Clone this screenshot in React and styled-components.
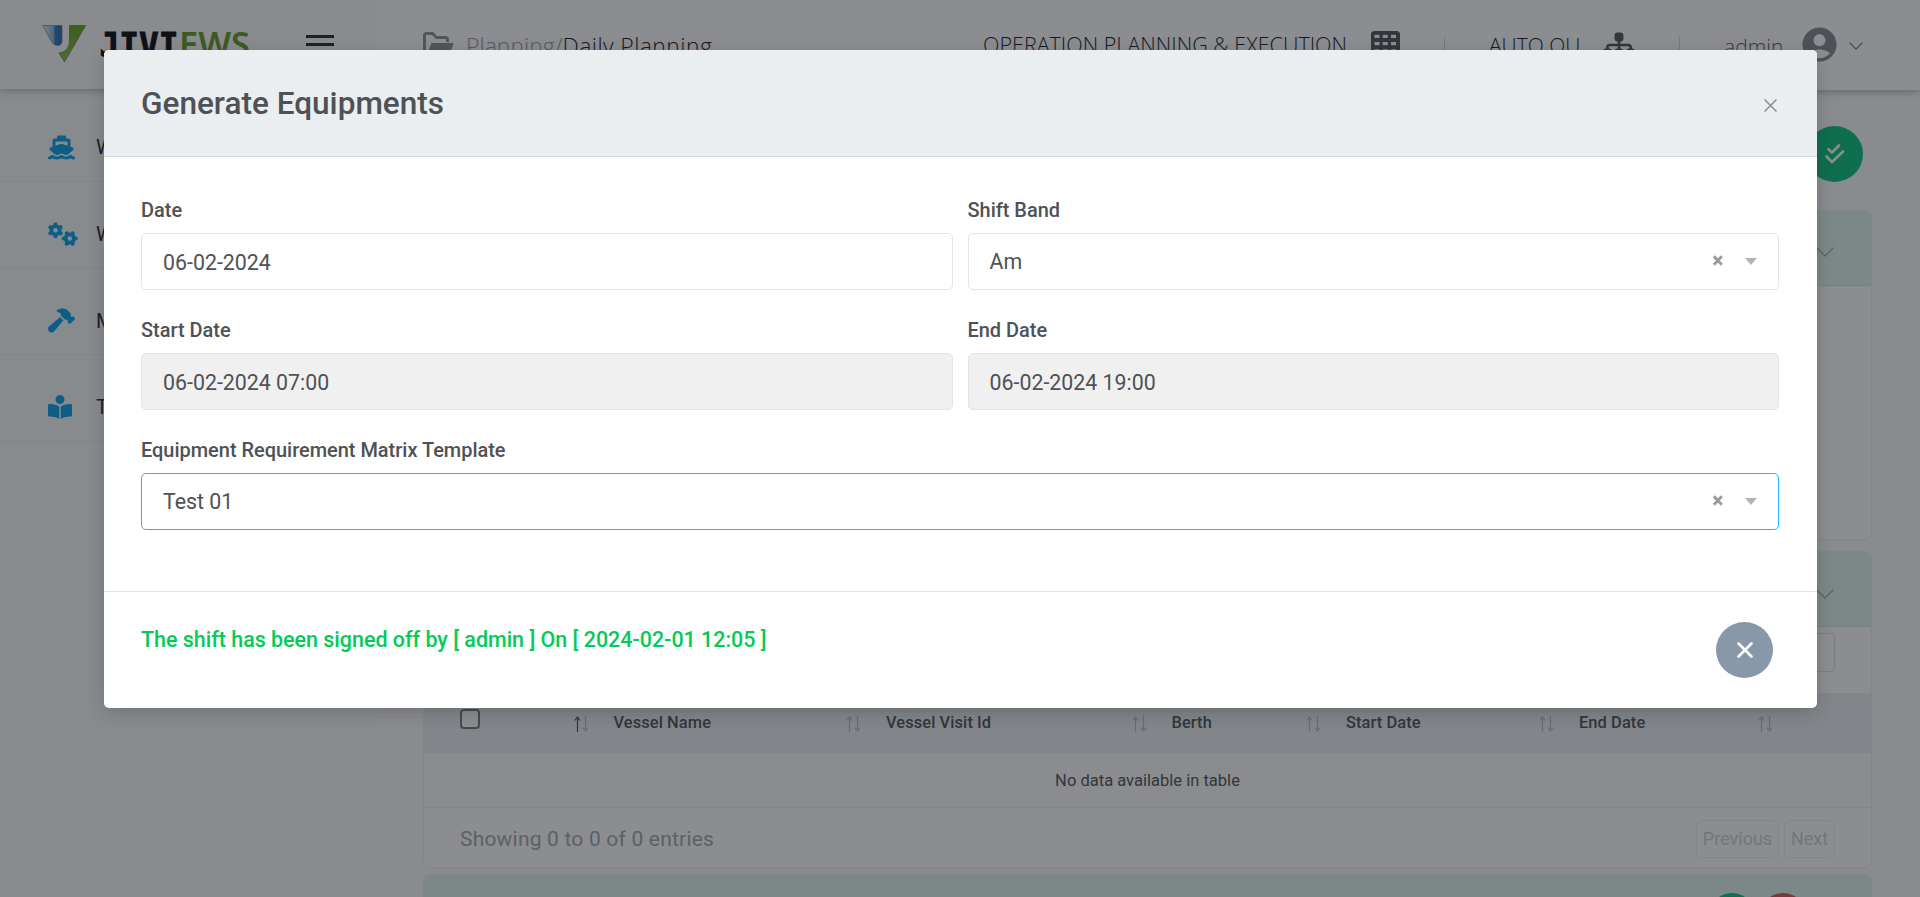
import React from "react";
import styled, { createGlobalStyle } from "styled-components";
import { FaShip, FaGears, FaHammer, FaBookOpenReader, FaSitemap } from "react-icons/fa6";
import { MdAccountCircle } from "react-icons/md";

const Global = createGlobalStyle`
  * { box-sizing: border-box; }
  body { margin: 0; font-family: Roboto, "Liberation Sans", sans-serif; color: #4e5155; }
`;

const Page = styled.div`
  position: relative;
  width: 1920px;
  height: 897px;
  overflow: hidden;
  display: flex;
  background: #fbfbfd;
`;

/* ---------- sidebar ---------- */
const Sidebar = styled.aside`
  width: 375px;
  flex: none;
  background: #f9fafb;
`;
const Brand = styled.div`
  height: 89px;
  display: flex;
  align-items: flex-start;
  justify-content: space-between;
  padding: 22px 41px 0 41px;
  background: #fafbfc;
  box-shadow: 0 2px 8px rgba(24, 28, 33, 0.3);
  clip-path: inset(0 0 -14px 0);
`;
const MenuIcon = styled.div`
  width: 28px;
  margin-top: 13px;
  display: grid;
  gap: 5px;
`;
const MenuLine = styled.i`
  height: 3px;
  background: #23262b;
`;
const NavItem = styled.div`
  height: ${(p) => p.$h}px;
  display: flex;
  align-items: center;
  gap: ${(p) => p.$gap}px;
  padding: ${(p) => p.$top || 18}px 0 0 48px;
  border-bottom: 1px solid #eceef0;
  font-size: 20px;
  color: #222;
  svg { flex: none; color: #03a0ec; }
`;

/* ---------- top bar ---------- */
const Main = styled.main`
  flex: 1;
  min-width: 0;
`;
const TopBar = styled.header`
  height: 90px;
  display: flex;
  align-items: flex-start;
  padding: 0 57px 0 48px;
  background: #fff;
  box-shadow: 0 2px 8px rgba(24, 28, 33, 0.3);
  clip-path: inset(0 0 -14px 0);
  font-family: "Open Sans", "Noto Sans", sans-serif;
  font-weight: 300;
  color: #16181b;
`;
const Crumbs = styled.div`
  width: 560px;
  display: flex;
  svg { margin: 32px 12px 0 0; }
`;
const TopText = styled.span`
  white-space: nowrap;
  margin-top: ${(p) => p.$y || 29}px;
  width: ${(p) => (p.$w ? p.$w + "px" : "auto")};
  font-size: ${(p) => p.$size || 21}px;
  letter-spacing: ${(p) => p.$ls || 0}px;
  line-height: 30px;
  color: ${(p) => p.$color || "inherit"};
`;
const TopIcon = styled.span`
  display: flex;
  margin: ${(p) => p.$m};
`;
const Rule = styled.i`
  width: 1px;
  height: 22px;
  margin-top: 36px;
  background: #d5d7d9;
`;

/* ---------- page content ---------- */
const Content = styled.div`
  padding: 36px 48px 0 48px;
`;
const Actions = styled.div`
  display: flex;
  justify-content: flex-end;
  padding-right: 9px;
  height: 84px;
`;
const Round = styled.div`
  width: ${(p) => p.$size || 57}px;
  height: ${(p) => (p.$size ? p.$size : 56)}px;
  border-radius: 50%;
  display: flex;
  flex: none;
  align-items: center;
  justify-content: center;
  background: ${(p) => p.$bg};
`;
const Card = styled.section`
  height: ${(p) => p.$h}px;
  margin-bottom: ${(p) => p.$mb || 0}px;
  border: 1px solid #eceef0;
  border-radius: 6px;
  background: #fff;
  overflow: hidden;
`;
const CardHead = styled.div`
  height: 75px;
  display: flex;
  justify-content: flex-end;
  gap: 5px;
  padding: ${(p) => p.$pad || "37px 37px 0 0"};
  background: #e0f4ef;
  border-bottom: 1px solid #cfe3df;
`;
const SearchRow = styled.div`
  height: 66px;
  display: flex;
  justify-content: flex-end;
  padding: 6px 36px 0 0;
`;
const SearchBox = styled.div`
  width: 240px;
  height: 39px;
  border: 1px solid #dcdee0;
  border-radius: 5px;
`;
const HeadRow = styled.div`
  display: grid;
  grid-template-columns: 173px 272.5px 285.5px 174.5px 233px 219px 1fr;
  height: 60px;
  background: #eceff2;
`;
const HeadCell = styled.div`
  display: flex;
  justify-content: space-between;
  padding: 19px 7.5px 0 16.5px;
  font-size: 16.4px;
  line-height: 22px;
  font-weight: 500;
  letter-spacing: 0.1px;
  border-right: 1px solid #eef1f3;
  svg { margin-top: 4px; }
`;
const Check = styled.i`
  width: 20px;
  height: 20px;
  margin: -3px 0 0 19px;
  border: 2px solid #75787c;
  border-radius: 4px;
  background: #fff;
`;
const EmptyRow = styled.div`
  height: 55px;
  line-height: 56px;
  text-align: center;
  font-size: 16.55px;
  background: #fdfdfd;
  border-bottom: 1px solid #eceef0;
`;
const TableFoot = styled.div`
  height: 60px;
  display: flex;
  align-items: center;
  padding: 2px 36px 0 36px;
  font-size: 21px;
  color: #a3a4a6;
`;
const Showing = styled.span`
  flex: 1;
  letter-spacing: 0.2px;
`;
const PageBtn = styled.span`
  width: ${(p) => p.$w}px;
  height: 38px;
  margin-left: 5px;
  line-height: 36px;
  text-align: center;
  font-size: 18px;
  color: #d0d1d3;
  border: 1px solid #eceef0;
  border-radius: 5px;
`;

/* ---------- modal ---------- */
const Overlay = styled.div`
  position: absolute;
  inset: 0;
  display: flex;
  align-items: flex-start;
  padding: 50px 103px 0 104px;
  background: rgba(24, 28, 33, 0.5);
`;
const Modal = styled.div`
  flex: 1;
  height: 658px;
  border-radius: 5px;
  background: #fff;
  overflow: hidden;
  box-shadow: 0 5px 20px -4px rgba(24, 28, 33, 0.3);
`;
const ModalHead = styled.div`
  height: 107px;
  display: flex;
  justify-content: space-between;
  padding: 33px 40px 0 37px;
  background: #eaeef1;
  border-bottom: 1px solid #d5d9dc;
`;
const Title = styled.h1`
  margin: 1px 0 0;
  font-size: 31.55px;
  line-height: 40px;
  font-weight: 500;
  color: #4e5155;
`;
const CloseIcon = styled.svg`
  margin-top: 16px;
`;
const Form = styled.div`
  height: 434px;
  padding: 39px 38px 0 37px;
  display: grid;
  grid-template-columns: 1fr 1fr;
  grid-auto-rows: 120px;
  column-gap: 15px;
`;
const Field = styled.div`
  grid-column: ${(p) => (p.$wide ? "1 / -1" : "auto")};
`;
const Label = styled.div`
  height: 37px;
  line-height: 28px;
  font-size: 19.95px;
  font-weight: 500;
`;
const Control = styled.div`
  height: 57px;
  display: flex;
  align-items: center;
  padding: 0 20px 0 21px;
  font-size: 21.35px;
  border: 1px solid ${(p) => (p.$focus ? "#26b4ff" : "#e3e4e6")};
  border-radius: 5px;
  background: ${(p) => (p.$disabled ? "#f0f0f1" : "#fff")};
`;
const Value = styled.span`
  flex: 1;
  line-height: 25px;
  padding-top: ${(p) => (p.$up ? 0 : 2)}px;
`;
const SelectMarks = styled.svg`
  flex: none;
  margin-bottom: 1px;
`;
const ModalFoot = styled.div`
  height: 117px;
  display: flex;
  justify-content: space-between;
  padding: 30px 44px 0 37px;
  border-top: 1px solid #e3e4e6;
`;
const Signed = styled.div`
  margin-top: 3px;
  line-height: 29px;
  font-size: 21.45px;
  font-weight: 500;
  color: #02cc55;
`;

const Logo = () => (
  <svg width="216" height="60" viewBox="0 0 216 60">
    <defs>
      <linearGradient id="blue" x1="0" x2="1">
        <stop offset="0" stopColor="#e4f2fc" />
        <stop offset=".55" stopColor="#84b4dc" />
        <stop offset=".65" stopColor="#2878c2" />
        <stop offset="1" stopColor="#1e68ae" />
      </linearGradient>
      <linearGradient id="green" x1="0" x2="0" y1="0" y2="1">
        <stop offset="0" stopColor="#65a012" />
        <stop offset="1" stopColor="#7fc04a" />
      </linearGradient>
    </defs>
    <path d="M1.700 3.500H21V19q0 4.500-4.500 4.500-4 0-6-4z" fill="url(#blue)" stroke="#777" strokeWidth=".7" />
    <path d="M28.500 3.500h16.200L23.500 40 18 31q10-1 10.500-12z" fill="url(#green)" stroke="#63714f" strokeWidth=".7" />
    <text x="58.500" y="34.800" fontFamily="DejaVu Sans Mono" fontWeight="700" fontSize="33" fill="#06070a" stroke="#06070a" strokeWidth=".9" textLength="79" lengthAdjust="spacingAndGlyphs">JIVI</text>
    <text x="138" y="34.800" fontFamily="Noto Sans" fontWeight="600" fontSize="35" fill="#64981f" textLength="71" lengthAdjust="spacingAndGlyphs">EWS</text>
  </svg>
);

const FolderIcon = () => (
  <svg width="31" height="26" viewBox="0 0 31 26" fill="none">
    <path d="M1.500 22V3.500q0-2 2-2h6l4 4h9q2 0 2 2v2.500" stroke="#8d9093" strokeWidth="3" />
    <path d="M8.500 11H29q2 0 1.200 2L26 23q-1 2-3 2H3z" fill="#8d9093" />
  </svg>
);

const GridIcon = () => (
  <svg width="29" height="29" viewBox="0 0 29 29">
    <rect width="29" height="29" rx="3.500" fill="#4e5155" />
    {[3.800, 11, 18.300].map((y) =>
      [3.500, 11.700, 20].map((x) => <rect key={x + "-" + y} x={x} y={y} width="5" height="3.200" fill="#fff" />)
    )}
  </svg>
);

const Chevron = ({ w = 18, color = "#a0a8a9" }) => (
  <svg width={w} height={w / 2 + 1} viewBox="0 0 18 10" fill="none">
    <path d="M.7.700 9 9 17.300.700" stroke={color} strokeWidth="1.300" />
  </svg>
);

const DoubleCheck = () => (
  <svg width="20" height="20" viewBox="0 0 20 20" fill="none" stroke="#fff" strokeWidth="2.600" strokeLinecap="round" strokeLinejoin="round">
    <path d="M3.500 5.200 7 8.500l7-7M1.500 12.500 7 18 18 7.500" />
  </svg>
);

const Sort = ({ active }) => (
  <svg width="15" height="16" viewBox="0 0 15 16" fill="none" strokeWidth="1.200">
    <path d="M3.500 16V1M.8 4.500 3.500 1l2.700 3.500" stroke={active ? "#4e5155" : "#b9bbbe"} />
    <path d="M11.500 0v15M8.800 11.500l2.700 3.500 2.700-3.500" stroke="#b9bbbe" />
  </svg>
);

const Marks = () => (
  <SelectMarks width="50" height="16" viewBox="0 0 50 16">
    <path d="M5.800 3.300l8 8.400M13.800 3.300l-8 8.400" stroke="#999" strokeWidth="2.700" />
    <path d="M37 5h12l-6 7z" fill="#b3b3b5" />
  </SelectMarks>
);

const columns = ["Vessel Name", "Vessel Visit Id", "Berth", "Start Date", "End Date"];

export default function App() {
  return (
    <>
      <Global />
      <Page>
        <Sidebar>
          <Brand>
            <Logo />
            <MenuIcon><MenuLine /><MenuLine /><MenuLine /></MenuIcon>
          </Brand>
          <NavItem $h={93} $top={24} $gap={21}><FaShip size={27} />W</NavItem>
          <NavItem $h={87} $gap={18}><FaGears size={30} />W</NavItem>
          <NavItem $h={86} $gap={21}><FaHammer size={27} />M</NavItem>
          <NavItem $h={87} $gap={24}><FaBookOpenReader size={24} />T</NavItem>
        </Sidebar>
        <Main>
          <TopBar>
            <Crumbs>
              <FolderIcon />
              <TopText $y={31} $size={23} $color="#97999c">Planning/</TopText>
              <TopText $y={31} $size={23} $ls={0.4}>Daily Planning</TopText>
            </Crumbs>
            <TopText $w={388} $y={30} $size={21.5}>OPERATION PLANNING &amp; EXECUTION</TopText>
            <TopIcon $m="31px 44px 0 0"><GridIcon /></TopIcon>
            <Rule />
            <TopIcon $m="0 0 0 44px"><TopText $w={70} $y={30}>AUTO QU</TopText></TopIcon>
            <TopIcon $m="29px 44px 0"><FaSitemap size={32} color="#4e5155" /></TopIcon>
            <Rule />
            <TopIcon $m="0 14px 0 44px"><TopText $y={31} $color="#55585c">admin</TopText></TopIcon>
            <TopIcon $m="24px 9px 0 auto"><MdAccountCircle size={41} color="#85898e" /></TopIcon>
            <TopIcon $m="42px 0 0 0"><Chevron w={14} color="#55585c" /></TopIcon>
          </TopBar>
          <Content>
            <Actions><Round $bg="#06c079"><DoubleCheck /></Round></Actions>
            <Card $h={330} $mb={11}><CardHead $pad="36px 37px 0 0"><Chevron /></CardHead></Card>
            <Card $h={317} $mb={6}>
              <CardHead><Chevron /></CardHead>
              <SearchRow><SearchBox /></SearchRow>
              <HeadRow>
                <HeadCell><Check /><Sort active /></HeadCell>
                {columns.map((c) => <HeadCell key={c}>{c}<Sort /></HeadCell>)}
              </HeadRow>
              <EmptyRow>No data available in table</EmptyRow>
              <TableFoot>
                <Showing>Showing 0 to 0 of 0 entries</Showing>
                <PageBtn $w={83}>Previous</PageBtn>
                <PageBtn $w={51}>Next</PageBtn>
              </TableFoot>
            </Card>
            <Card $h={330}>
              <CardHead $pad="18px 65px 0 0"><Round $size={46} $bg="#06c079" /><Round $size={46} $bg="#d9534f" /></CardHead>
            </Card>
          </Content>
        </Main>
        <Overlay>
          <Modal>
            <ModalHead>
              <Title>Generate Equipments</Title>
              <CloseIcon width="13" height="13" viewBox="0 0 13 13">
                <path d="M.5.500l12 12M12.500.500l-12 12" stroke="#8b8f93" strokeWidth="1.500" />
              </CloseIcon>
            </ModalHead>
            <Form>
              <Field><Label>Date</Label><Control><Value>06-02-2024</Value></Control></Field>
              <Field><Label>Shift Band</Label><Control><Value $up>Am</Value><Marks /></Control></Field>
              <Field><Label>Start Date</Label><Control $disabled><Value>06-02-2024 07:00</Value></Control></Field>
              <Field><Label>End Date</Label><Control $disabled><Value>06-02-2024 19:00</Value></Control></Field>
              <Field $wide><Label>Equipment Requirement Matrix Template</Label><Control $focus><Value $up>Test 01</Value><Marks /></Control></Field>
            </Form>
            <ModalFoot>
              <Signed>The shift has been signed off by [ admin ] On [ 2024-02-01 12:05 ]</Signed>
              <Round $bg="#8897aa">
                <svg width="16" height="16" viewBox="0 0 16 16" stroke="#fff" strokeWidth="2.600" strokeLinecap="round">
                  <path d="M1.500 1.500l13 13M14.500 1.500l-13 13" />
                </svg>
              </Round>
            </ModalFoot>
          </Modal>
        </Overlay>
      </Page>
    </>
  );
}
